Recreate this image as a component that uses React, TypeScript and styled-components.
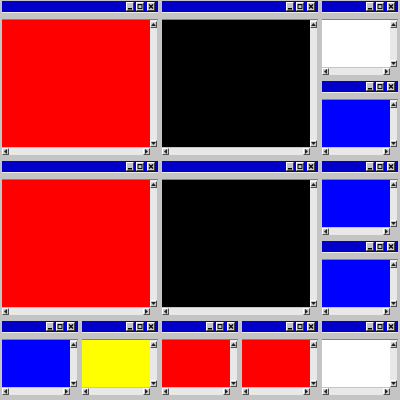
import React from "react";
import styled, { createGlobalStyle } from "styled-components";

const Global = createGlobalStyle`
  html, body { margin: 0; padding: 0; background: #c4c4c4; }
  body { font-family: "Liberation Sans", Arial, sans-serif; }
`;

const Grid = styled.div`
  width: 400px;
  height: 400px;
  display: grid;
  grid-template-columns: repeat(5, 80px);
  grid-template-rows: repeat(5, 80px);
  background: #c4c4c4;
  overflow: hidden;
`;

const Cell = styled.div<{ $col: string; $row: string }>`
  grid-column: ${(p) => p.$col};
  grid-row: ${(p) => p.$row};
  padding: 1px 2px 2px 2px;
  display: flex;
  min-width: 0;
  min-height: 0;
`;

const Win = styled.div`
  flex: 1;
  display: flex;
  flex-direction: column;
  background: #c4c4c4;
  min-width: 0;
  min-height: 0;
`;

const TitleBar = styled.div`
  height: 11px;
  flex: none;
  background: #0000c8;
  display: flex;
  justify-content: flex-end;
  align-items: center;
  gap: 2px;
  padding-right: 3px;
`;

const TitleBtn = styled.div<{ $wide?: boolean }>`
  width: 6px;
  height: 7px;
  margin-left: ${(p) => (p.$wide ? "1px" : "0")};
  background: #c4c4c4;
  border-top: 1px solid #ffffff;
  border-left: 1px solid #ffffff;
  border-right: 1px solid #404040;
  border-bottom: 1px solid #404040;
  display: flex;
  align-items: center;
  justify-content: center;
  svg { display: block; }
`;

const Sep = styled.div`
  height: 6px;
  flex: none;
  border-top: 1px solid #ececec;
`;

const Body = styled.div`
  flex: 1;
  display: flex;
  min-height: 0;
  border-top: 1px solid #808080;
  padding-right: 1px;
`;

const Client = styled.div<{ $color: string }>`
  flex: 1;
  background: ${(p) => p.$color};
`;

const VScroll = styled.div`
  width: 7px;
  flex: none;
  background: #e8e8e8;
  display: flex;
  flex-direction: column;
  justify-content: space-between;
  padding-top: 1px;
`;

const HRow = styled.div`
  height: 7px;
  flex: none;
  display: flex;
  margin: 1px 1px 3px 0;
`;

const HScroll = styled.div`
  flex: 1;
  background: #e8e8e8;
  display: flex;
  justify-content: space-between;
`;

const Corner = styled.div`
  width: 7px;
  flex: none;
  background: #c4c4c4;
`;

const Arrow = styled.div`
  width: 5px;
  height: 5px;
  background: #cccccc;
  border-top: 1px solid #ffffff;
  border-left: 1px solid #ffffff;
  border-right: 1px solid #505050;
  border-bottom: 1px solid #505050;
  display: flex;
  align-items: center;
  justify-content: center;
  svg { display: block; }
`;

type Dir = "up" | "down" | "left" | "right";

const tri: Record<Dir, string> = {
  up: "0,4 2.5,1 5,4",
  down: "0,1 2.5,4 5,1",
  left: "4,0 1,2.5 4,5",
  right: "1,0 4,2.5 1,5",
};

const ScrollArrow = ({ dir }: { dir: Dir }) => (
  <Arrow>
    <svg width="5" height="5" viewBox="0 0 5 5">
      <polygon points={tri[dir]} fill="#202020" />
    </svg>
  </Arrow>
);

const MinIcon = () => (
  <svg width="6" height="7" viewBox="0 0 6 7">
    <rect x="1" y="5" width="4" height="1.5" fill="#000" />
  </svg>
);
const MaxIcon = () => (
  <svg width="6" height="7" viewBox="0 0 6 7">
    <rect x="1" y="1.5" width="4" height="4" fill="none" stroke="#000" strokeWidth="0.9" />
    <rect x="1" y="1" width="4" height="1.2" fill="#000" />
  </svg>
);
const CloseIcon = () => (
  <svg width="6" height="7" viewBox="0 0 6 7">
    <path d="M1 1.5 L5 5.5 M5 1.5 L1 5.5" stroke="#000" strokeWidth="1.3" />
  </svg>
);

const Window = ({ color, col, row }: { color: string; col: string; row: string }) => (
  <Cell $col={col} $row={row}>
    <Win>
      <TitleBar>
        <TitleBtn>
          <MinIcon />
        </TitleBtn>
        <TitleBtn>
          <MaxIcon />
        </TitleBtn>
        <TitleBtn $wide>
          <CloseIcon />
        </TitleBtn>
      </TitleBar>
      <Sep />
      <Body>
        <Client $color={color} />
        <VScroll>
          <ScrollArrow dir="up" />
          <ScrollArrow dir="down" />
        </VScroll>
      </Body>
      <HRow>
        <HScroll>
          <ScrollArrow dir="left" />
          <ScrollArrow dir="right" />
        </HScroll>
        <Corner />
      </HRow>
    </Win>
  </Cell>
);

const windows = [
  { color: "#ff0000", col: "1 / 3", row: "1 / 3" },
  { color: "#000000", col: "3 / 5", row: "1 / 3" },
  { color: "#ffffff", col: "5 / 6", row: "1 / 2" },
  { color: "#0000ff", col: "5 / 6", row: "2 / 3" },
  { color: "#ff0000", col: "1 / 3", row: "3 / 5" },
  { color: "#000000", col: "3 / 5", row: "3 / 5" },
  { color: "#0000ff", col: "5 / 6", row: "3 / 4" },
  { color: "#0000ff", col: "5 / 6", row: "4 / 5" },
  { color: "#0000ff", col: "1 / 2", row: "5 / 6" },
  { color: "#ffff00", col: "2 / 3", row: "5 / 6" },
  { color: "#ff0000", col: "3 / 4", row: "5 / 6" },
  { color: "#ff0000", col: "4 / 5", row: "5 / 6" },
  { color: "#ffffff", col: "5 / 6", row: "5 / 6" },
];

export default function App() {
  return (
    <>
      <Global />
      <Grid>
        {windows.map((w, i) => (
          <Window key={i} {...w} />
        ))}
      </Grid>
    </>
  );
}
